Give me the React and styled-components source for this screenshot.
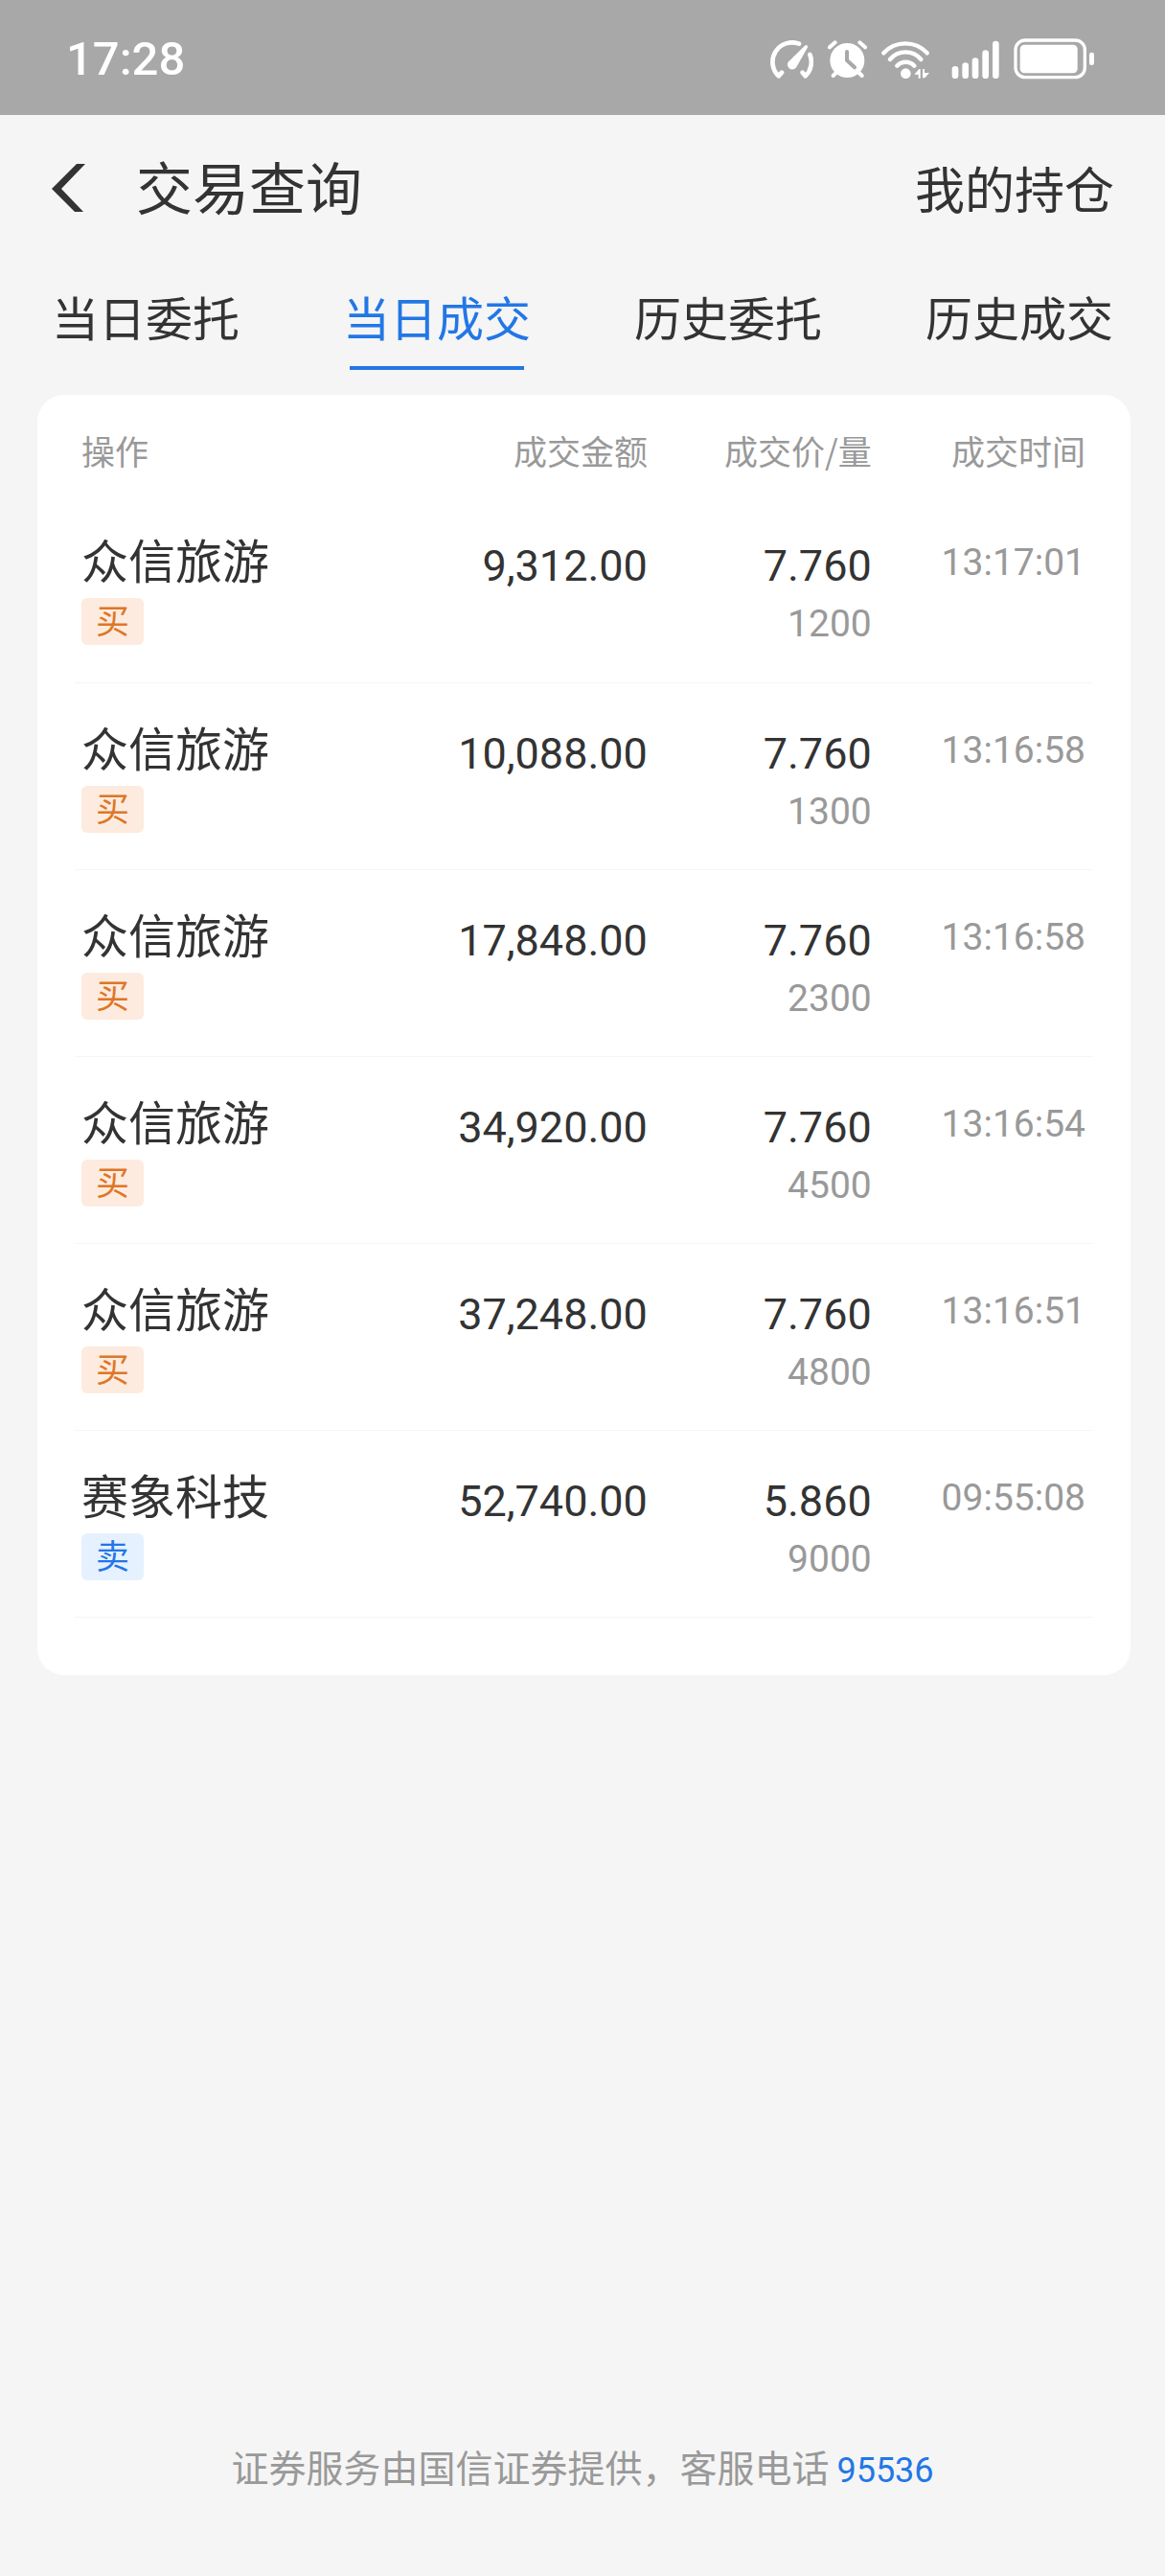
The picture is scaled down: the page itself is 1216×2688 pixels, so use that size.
import React, { useState } from 'react';
import styled, { createGlobalStyle } from 'styled-components';

const white = '#ffffff';
const page = '#f5f5f5';
const bar = '#a8a8a8';
const ink = '#333333';
const grey = '#999999';
const primary = '#2277e6';
const latin = 'Roboto, "Noto Sans CJK SC", sans-serif';
const chinese = '"Noto Sans CJK SC", sans-serif';

const GlobalStyle = createGlobalStyle`
  * {
    box-sizing: border-box;
  }

  body {
    margin: 0;
    background: ${ page };
    color: ${ ink };
    font-family: ${ chinese };
  }

  button {
    padding: 0;
    border: 0;
    background: none;
    color: inherit;
    font: inherit;
    cursor: pointer;
  }
`;

const Screen = styled.div`
  display: flex;
  flex-direction: column;
  min-height: 100vh;
`;

const StatusBar = styled.div`
  display: flex;
  align-items: center;
  justify-content: space-between;
  height: 120px;
  padding: 3px 73px 0 69px;
  background: ${ bar };
  color: ${ white };
`;

const Clock = styled.time`
  font: 500 49px/60px ${ latin };
`;

const StatusIcons = styled.div`
  display: flex;
  align-items: center;
  gap: 15px;

  svg {
    display: block;
  }
`;

const Header = styled.header`
  display: flex;
  align-items: center;
  height: 152px;
  padding: 0 53px 0 52px;
`;

const Back = styled.button`
  width: 40px;
  height: 52px;

  svg {
    display: block;
  }
`;

const Title = styled.h1`
  flex: 1;
  margin: 0 0 0 50px;
  padding-bottom: 4px;
  font-size: 59px;
  line-height: 80px;
  font-weight: 400;
`;

const HeaderLink = styled.a`
  font-size: 52px;
  line-height: 80px;
  color: ${ ink };
  text-decoration: none;
`;

const Tabs = styled.nav`
  display: grid;
  grid-template-columns: repeat(4, 1fr);
  height: 140px;
`;

const Tab = styled.button`
  display: flex;
  flex-direction: column;
  align-items: center;
  justify-content: flex-start;
  padding-top: 26px;
  font-size: 49px;
  line-height: 64px;
  color: ${ ({ $active }) => ($active ? primary : 'inherit') };

  &::after {
    content: '';
    width: 182px;
    height: 4px;
    margin-top: 20px;
    background: ${ ({ $active }) => ($active ? primary : 'transparent') };
  }
`;

const Card = styled.main`
  margin: 0 36px 0 39px;
  padding: 0 39px 60px;
  border-radius: 28px;
  background: ${ white };
`;

const Table = styled.table`
  width: 100%;
  table-layout: fixed;
  border-collapse: collapse;
`;

const HeadCell = styled.th`
  width: ${ ({ $width }) => $width };
  height: 105px;
  padding: 40px 8px 29px 7px;
  font-size: 35px;
  line-height: 36px;
  font-weight: 400;
  color: ${ grey };
  text-align: ${ ({ $left }) => ($left ? 'left' : 'right') };
  white-space: nowrap;
`;

const Cell = styled.td`
  height: 195px;
  padding: ${ ({ $top }) => $top || 36 }px 8px 0 7px;
  border-bottom: 1px solid ${ page };
  text-align: ${ ({ $left }) => ($left ? 'left' : 'right') };
  vertical-align: top;
`;

const Name = styled.div`
  font-size: 49px;
  line-height: 60px;
`;

const Tag = styled.span`
  display: block;
  width: 65px;
  height: 49px;
  margin-top: 11px;
  border-radius: 6px;
  background: ${ ({ $sell }) => ($sell ? '#e6f1ff' : '#fdebdf') };
  color: ${ ({ $sell }) => ($sell ? primary : '#df7626') };
  font-size: 35px;
  line-height: 44px;
  text-align: center;
`;

const Figure = styled.div`
  font: 400 45px/60px ${ latin };
`;

const SmallFigure = styled.div`
  font: 400 39px/60px ${ latin };
  color: ${ grey };
`;

const Footer = styled.footer`
  margin-top: auto;
  padding: 60px 24px 82px;
  font-size: 39px;
  line-height: 56px;
  color: ${ grey };
  text-align: center;
`;

const Phone = styled.a`
  margin-left: 8px;
  font-family: ${ latin };
  font-size: 36px;
  color: ${ primary };
  text-decoration: none;
`;

const GaugeIcon = () => (
  <svg width="45" height="40" viewBox="0 0 135 120" fill="none" stroke={white} strokeWidth="14" strokeLinecap="round">
    <path d="M36 101L26 112A61 61 0 0 1 90 11" strokeLinejoin="round" />
    <path d="M124 45A61 61 0 0 1 110 112L101 101" strokeLinejoin="round" />
    <path d="M56 68L108 17a5 5 0 0 1 8 7L82 84A15 15 0 1 1 56 68z" fill={white} stroke="none" />
  </svg>
);

const AlarmIcon = () => (
  <svg width="41" height="40" viewBox="0 0 123 120" fill="none" stroke={white} strokeWidth="12" strokeLinecap="round">
    <circle cx="61" cy="63" r="54" fill={white} stroke="none" />
    <path d="M6 22L23 7M100 7l17 15M17 111l12-12M107 111L95 99" />
    <path d="M60 36v27l24 22" stroke={bar} strokeLinejoin="round" />
  </svg>
);

const WifiIcon = () => (
  <svg width="50" height="40" viewBox="0 0 150 120" fill="none" stroke={white} strokeWidth="13" strokeLinecap="round">
    <path d="M7 40A92 92 0 0 1 143 40M27 60A63 63 0 0 1 124 60M49 80A37 37 0 0 1 103 80" />
    <circle cx="76" cy="104" r="16" fill={white} stroke="none" />
    <path d="M103 107l15-17h4v29h-6v-12zM150 102l-14 16h-1V102v16h-6V90h6v12z" fill={white} stroke="none" />
  </svg>
);

const SignalIcon = () => (
  <svg width="58" height="40" viewBox="0 0 174 120" fill={white}>
    <rect x="26" y="81" width="20" height="39" rx="10" />
    <rect x="58" y="70" width="20" height="50" rx="10" />
    <rect x="89" y="55" width="20" height="65" rx="10" />
    <rect x="121" y="31" width="20" height="89" rx="10" />
    <rect x="153" y="2" width="20" height="118" rx="10" />
  </svg>
);

const BatteryIcon = () => (
  <svg width="85" height="43" viewBox="0 0 255 129" fill={white}>
    <rect x="6" y="6" width="217" height="116" rx="30" fill="none" stroke={white} strokeWidth="10" />
    <rect x="20" y="20" width="180" height="89" rx="14" />
    <rect x="237" y="44" width="15" height="40" rx="7" />
  </svg>
);

const BackIcon = () => (
  <svg width="40" height="52" viewBox="0 0 40 52" fill={ink}>
    <path d="M28 1h9L12 27l23 24h-9L2 27z" />
  </svg>
);

const tabs = ['当日委托', '当日成交', '历史委托', '历史成交'];

const trades = [
  { name: '众信旅游', side: '买', amount: '9,312.00', price: '7.760', volume: '1200', time: '13:17:01' },
  { name: '众信旅游', side: '买', amount: '10,088.00', price: '7.760', volume: '1300', time: '13:16:58' },
  { name: '众信旅游', side: '买', amount: '17,848.00', price: '7.760', volume: '2300', time: '13:16:58' },
  { name: '众信旅游', side: '买', amount: '34,920.00', price: '7.760', volume: '4500', time: '13:16:54' },
  { name: '众信旅游', side: '买', amount: '37,248.00', price: '7.760', volume: '4800', time: '13:16:51' },
  { name: '赛象科技', side: '卖', amount: '52,740.00', price: '5.860', volume: '9000', time: '09:55:08' },
];

const TradeRow = ({
  name,
  side,
  amount,
  price,
  volume,
  time,
}) => (
  <tr>
    <Cell $left>
      <Name>{name}</Name>
      <Tag $sell={side === '卖'}>{side}</Tag>
    </Cell>
    <Cell $top={44}>
      <Figure>{amount}</Figure>
    </Cell>
    <Cell $top={44}>
      <Figure>{price}</Figure>
      <SmallFigure>{volume}</SmallFigure>
    </Cell>
    <Cell $top={40}>
      <SmallFigure>{time}</SmallFigure>
    </Cell>
  </tr>
);

const App = () => {
  const [active, setActive] = useState('当日成交');

  return (
    <Screen lang="zh-CN">
      <GlobalStyle />
      <StatusBar>
        <Clock>17:28</Clock>
        <StatusIcons>
          <GaugeIcon />
          <AlarmIcon />
          <WifiIcon />
          <SignalIcon />
          <BatteryIcon />
        </StatusIcons>
      </StatusBar>
      <Header>
        <Back type="button" aria-label="返回"><BackIcon /></Back>
        <Title>交易查询</Title>
        <HeaderLink href="#positions">我的持仓</HeaderLink>
      </Header>
      <Tabs>
        {tabs.map(tab => (
          <Tab
            key={tab}
            type="button"
            aria-pressed={tab === active}
            $active={tab === active}
            onClick={() => setActive(tab)}
          >
            {tab}
          </Tab>
        ))}
      </Tabs>
      <Card>
        <Table>
          <thead>
            <tr>
              <HeadCell $left $width="28%">操作</HeadCell>
              <HeadCell $width="29%">成交金额</HeadCell>
              <HeadCell $width="22%">成交价/量</HeadCell>
              <HeadCell $width="21%">成交时间</HeadCell>
            </tr>
          </thead>
          <tbody>
            {trades.map((trade, i) => <TradeRow key={i} {...trade} />)}
          </tbody>
        </Table>
      </Card>
      <Footer>
        证券服务由国信证券提供，客服电话
        <Phone href="tel:95536">95536</Phone>
      </Footer>
    </Screen>
  );
};

export default App;
